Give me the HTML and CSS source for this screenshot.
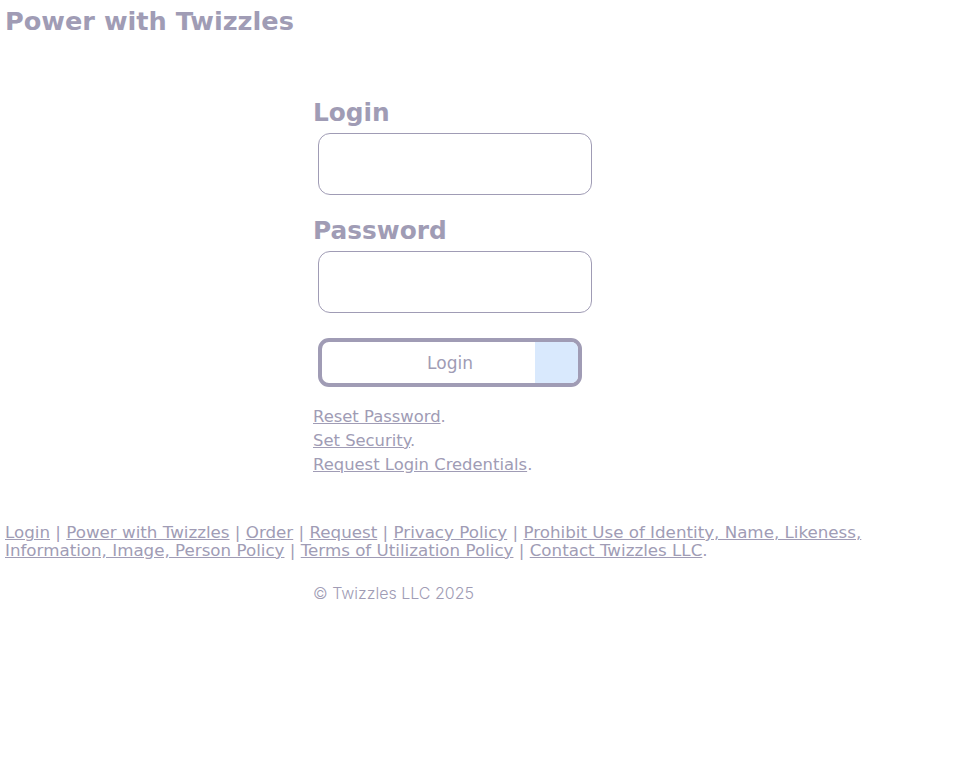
FILE: index.html
```html
<!DOCTYPE html>
<html>
<head>
<meta charset="utf-8">
<link rel="stylesheet" href="styles.css">
</head>
<body>
<h1 class="site-title">Power with Twizzles</h1>
<main class="login-area">
  <form class="login-form">
    <label class="field-label" for="login">Login</label>
    <input class="field-input" id="login" type="text">
    <label class="field-label" for="password">Password</label>
    <input class="field-input" id="password" type="password">
    <button class="submit-btn" type="button"><span class="submit-text">Login</span><span class="submit-side"></span></button>
  </form>
  <div class="help-links">
    <div class="help-row"><a href="#">Reset Password</a>.</div>
    <div class="help-row"><a href="#">Set Security</a>.</div>
    <div class="help-row"><a href="#">Request Login Credentials</a>.</div>
  </div>
</main>
<footer class="site-footer">
  <p class="footer-links"><a href="#">Login</a> | <a href="#">Power with Twizzles</a> | <a href="#">Order</a> | <a href="#">Request</a> | <a href="#">Privacy Policy</a> | <a href="#">Prohibit Use of Identity, Name, Likeness, Information, Image, Person Policy</a> | <a href="#">Terms of Utilization Policy</a> | <a href="#">Contact Twizzles LLC</a>.</p>
  <p class="copyright">© Twizzles LLC 2025</p>
</footer>
</body>
</html>
```
FILE: styles.css
```css
html, body {
  margin: 0;
  padding: 0;
  background: #ffffff;
}
body {
  padding: 5px;
  color: #a09cb5;
  font-family: "DejaVu Sans", Verdana, sans-serif;
  -webkit-font-smoothing: none;
}
a {
  color: #a09cb5;
}
.site-title {
  margin: 0;
  font-size: 25.6px;
  line-height: 32px;
  font-weight: bold;
}
.login-area {
  margin-left: 308px;
  margin-top: 60px;
  width: 320px;
}
.login-form {
  display: flex;
  flex-direction: column;
  align-items: flex-start;
}
.field-label {
  display: block;
  font-size: 24.8px;
  font-weight: bold;
  line-height: 32px;
}
.field-input {
  box-sizing: border-box;
  width: 274px;
  height: 62px;
  margin: 4px 0 20px 5px;
  border: 1px solid #a09cb5;
  border-radius: 12px;
  outline: none;
  background: #fff;
}
.submit-btn {
  box-sizing: border-box;
  position: relative;
  width: 264px;
  height: 49px;
  margin: 5px 0 0 5px;
  padding: 0;
  border: 4px solid #a09cb5;
  border-radius: 11px;
  background: #fff;
  overflow: hidden;
  display: flex;
  align-items: center;
  justify-content: center;
  font-family: "DejaVu Sans", Verdana, sans-serif;
  font-size: 17px;
  color: #a09cb5;
}
.submit-side {
  position: absolute;
  top: 0;
  right: 0;
  width: 43px;
  height: 100%;
  background: #d9e9fd;
}
.help-links {
  margin-top: 18px;
  font-size: 16.4px;
  line-height: 24px;
}
.site-footer {
  margin-top: 46px;
}
.footer-links {
  margin: 0;
  max-width: 900px;
  font-size: 16.7px;
  line-height: 18px;
}
.copyright {
  margin: 25px 0 0 308px;
  font-family: "Inter", "Noto Sans", sans-serif;
  font-weight: 300;
  font-size: 16px;
  line-height: 18px;
}
```
